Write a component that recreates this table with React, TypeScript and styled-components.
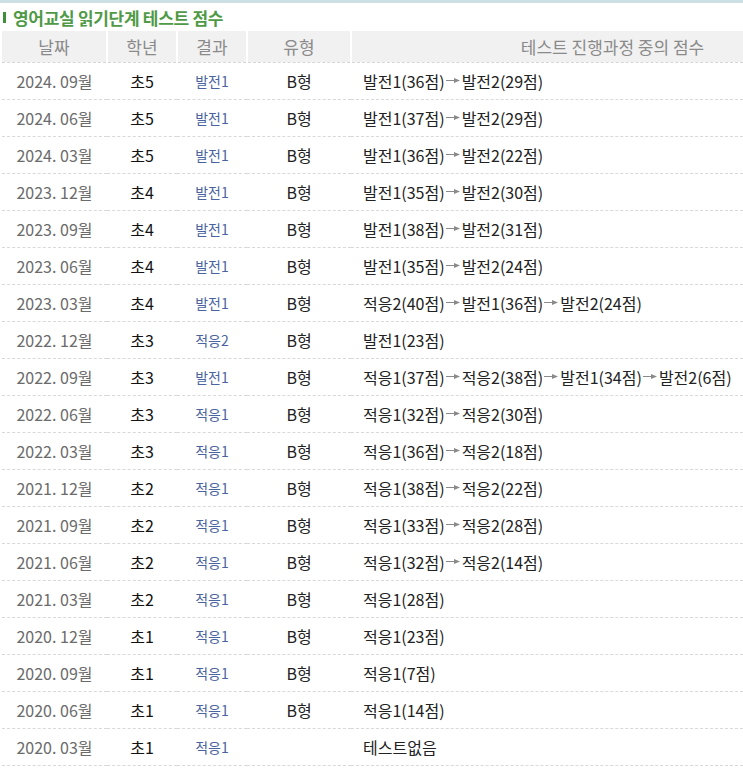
import React from 'react';
import styled, { createGlobalStyle } from 'styled-components';

const GlobalStyle = createGlobalStyle`
  html, body {
    margin: 0;
    padding: 0;
    background: #fff;
  }
  body {
    font-family: "Noto Sans CJK KR", "Noto Sans", sans-serif;
  }
`;

// 전체 영역
const Page = styled.div`
  width: 743px;
  border-top: 3px solid #cde0e5;
  padding: 0 0 0 2px;
  box-sizing: border-box;
  overflow: hidden;
`;

const Title = styled.h3`
  display: flex;
  align-items: center;
  gap: 7px;
  margin: 0;
  height: 28px;
  padding-left: 1px;
  font-size: 17px;
  font-weight: 700;
  color: #4f9a46;
  letter-spacing: -0.3px;
  line-height: 1;

  &::before {
    content: '';
    width: 3px;
    height: 11px;
    background: #3f8f3a;
  }
`;

const Table = styled.table`
  width: 741px;
  border-collapse: collapse;
  table-layout: fixed;
`;

const HeadCell = styled.th<{ $w?: number; $pad?: number }>`
  width: ${(p) => (p.$w ? `${p.$w}px` : 'auto')};
  height: 31px;
  padding: 0 0 0 ${(p) => p.$pad ?? 0}px;
  background: #f1f1f1;
  border-left: 2px solid #fff;
  border-bottom: 1px dashed #d6d6d6;
  color: #8a8a8a;
  font-size: 17px;
  font-weight: 400;
  text-align: center;
  box-sizing: border-box;

  &:first-child {
    border-left: none;
  }
`;

const Row = styled.tr`
  height: 37px;
  border-bottom: 1px dashed #d9d9d9;
`;

const Cell = styled.td<{ $kind: 'date' | 'grade' | 'result' | 'type' | 'score' }>`
  padding: 0;
  text-align: ${(p) => (p.$kind === 'score' ? 'left' : 'center')};
  padding-left: ${(p) => (p.$kind === 'score' ? '12px' : '0')};
  font-size: ${(p) => (p.$kind === 'result' ? '14px' : '16px')};
  color: ${(p) =>
    p.$kind === 'date' ? '#6b6b6b' : p.$kind === 'result' ? '#4a64a0' : p.$kind === 'grade' ? '#111' : '#222'};
  white-space: nowrap;
  vertical-align: middle;
`;

const Step = styled.span`
  display: inline-flex;
  align-items: center;
`;

const ArrowIcon = styled.svg`
  margin: 0 1px;
  flex: none;
`;

const Arrow = () => (
  <ArrowIcon width="15" height="7" viewBox="0 0 15 7">
    <line x1="0" y1="3.5" x2="9" y2="3.5" stroke="#8a8a8a" strokeWidth="1" />
    <polygon points="8,1 14,3.5 8,6" fill="#8a8a8a" />
  </ArrowIcon>
);

type Rec = { date: string; grade: string; result: string; type: string; steps: string[] };

const records: Rec[] = [
  { date: '2024. 09월', grade: '초5', result: '발전1', type: 'B형', steps: ['발전1(36점)', '발전2(29점)'] },
  { date: '2024. 06월', grade: '초5', result: '발전1', type: 'B형', steps: ['발전1(37점)', '발전2(29점)'] },
  { date: '2024. 03월', grade: '초5', result: '발전1', type: 'B형', steps: ['발전1(36점)', '발전2(22점)'] },
  { date: '2023. 12월', grade: '초4', result: '발전1', type: 'B형', steps: ['발전1(35점)', '발전2(30점)'] },
  { date: '2023. 09월', grade: '초4', result: '발전1', type: 'B형', steps: ['발전1(38점)', '발전2(31점)'] },
  { date: '2023. 06월', grade: '초4', result: '발전1', type: 'B형', steps: ['발전1(35점)', '발전2(24점)'] },
  { date: '2023. 03월', grade: '초4', result: '발전1', type: 'B형', steps: ['적응2(40점)', '발전1(36점)', '발전2(24점)'] },
  { date: '2022. 12월', grade: '초3', result: '적응2', type: 'B형', steps: ['발전1(23점)'] },
  { date: '2022. 09월', grade: '초3', result: '발전1', type: 'B형', steps: ['적응1(37점)', '적응2(38점)', '발전1(34점)', '발전2(6점)'] },
  { date: '2022. 06월', grade: '초3', result: '적응1', type: 'B형', steps: ['적응1(32점)', '적응2(30점)'] },
  { date: '2022. 03월', grade: '초3', result: '적응1', type: 'B형', steps: ['적응1(36점)', '적응2(18점)'] },
  { date: '2021. 12월', grade: '초2', result: '적응1', type: 'B형', steps: ['적응1(38점)', '적응2(22점)'] },
  { date: '2021. 09월', grade: '초2', result: '적응1', type: 'B형', steps: ['적응1(33점)', '적응2(28점)'] },
  { date: '2021. 06월', grade: '초2', result: '적응1', type: 'B형', steps: ['적응1(32점)', '적응2(14점)'] },
  { date: '2021. 03월', grade: '초2', result: '적응1', type: 'B형', steps: ['적응1(28점)'] },
  { date: '2020. 12월', grade: '초1', result: '적응1', type: 'B형', steps: ['적응1(23점)'] },
  { date: '2020. 09월', grade: '초1', result: '적응1', type: 'B형', steps: ['적응1(7점)'] },
  { date: '2020. 06월', grade: '초1', result: '적응1', type: 'B형', steps: ['적응1(14점)'] },
  { date: '2020. 03월', grade: '초1', result: '적응1', type: '', steps: ['테스트없음'] },
];

const App = () => {
  return (
    <Page>
      <GlobalStyle />
      <Title>영어교실 읽기단계 테스트 점수</Title>
      <Table>
        <thead>
          <tr>
            <HeadCell $w={105}>날짜</HeadCell>
            <HeadCell $w={70}>학년</HeadCell>
            <HeadCell $w={70}>결과</HeadCell>
            <HeadCell $w={104}>유형</HeadCell>
            <HeadCell $pad={130}>테스트 진행과정 중의 점수</HeadCell>
          </tr>
        </thead>
        <tbody>
          {records.map((r) => (
            <Row key={r.date}>
              <Cell $kind="date">{r.date}</Cell>
              <Cell $kind="grade">{r.grade}</Cell>
              <Cell $kind="result">{r.result}</Cell>
              <Cell $kind="type">{r.type}</Cell>
              <Cell $kind="score">
                <Step>
                  {r.steps.map((s, i) => (
                    <React.Fragment key={i}>
                      {i > 0 && <Arrow />}
                      {s}
                    </React.Fragment>
                  ))}
                </Step>
              </Cell>
            </Row>
          ))}
        </tbody>
      </Table>
    </Page>
  );
};

export default App;
